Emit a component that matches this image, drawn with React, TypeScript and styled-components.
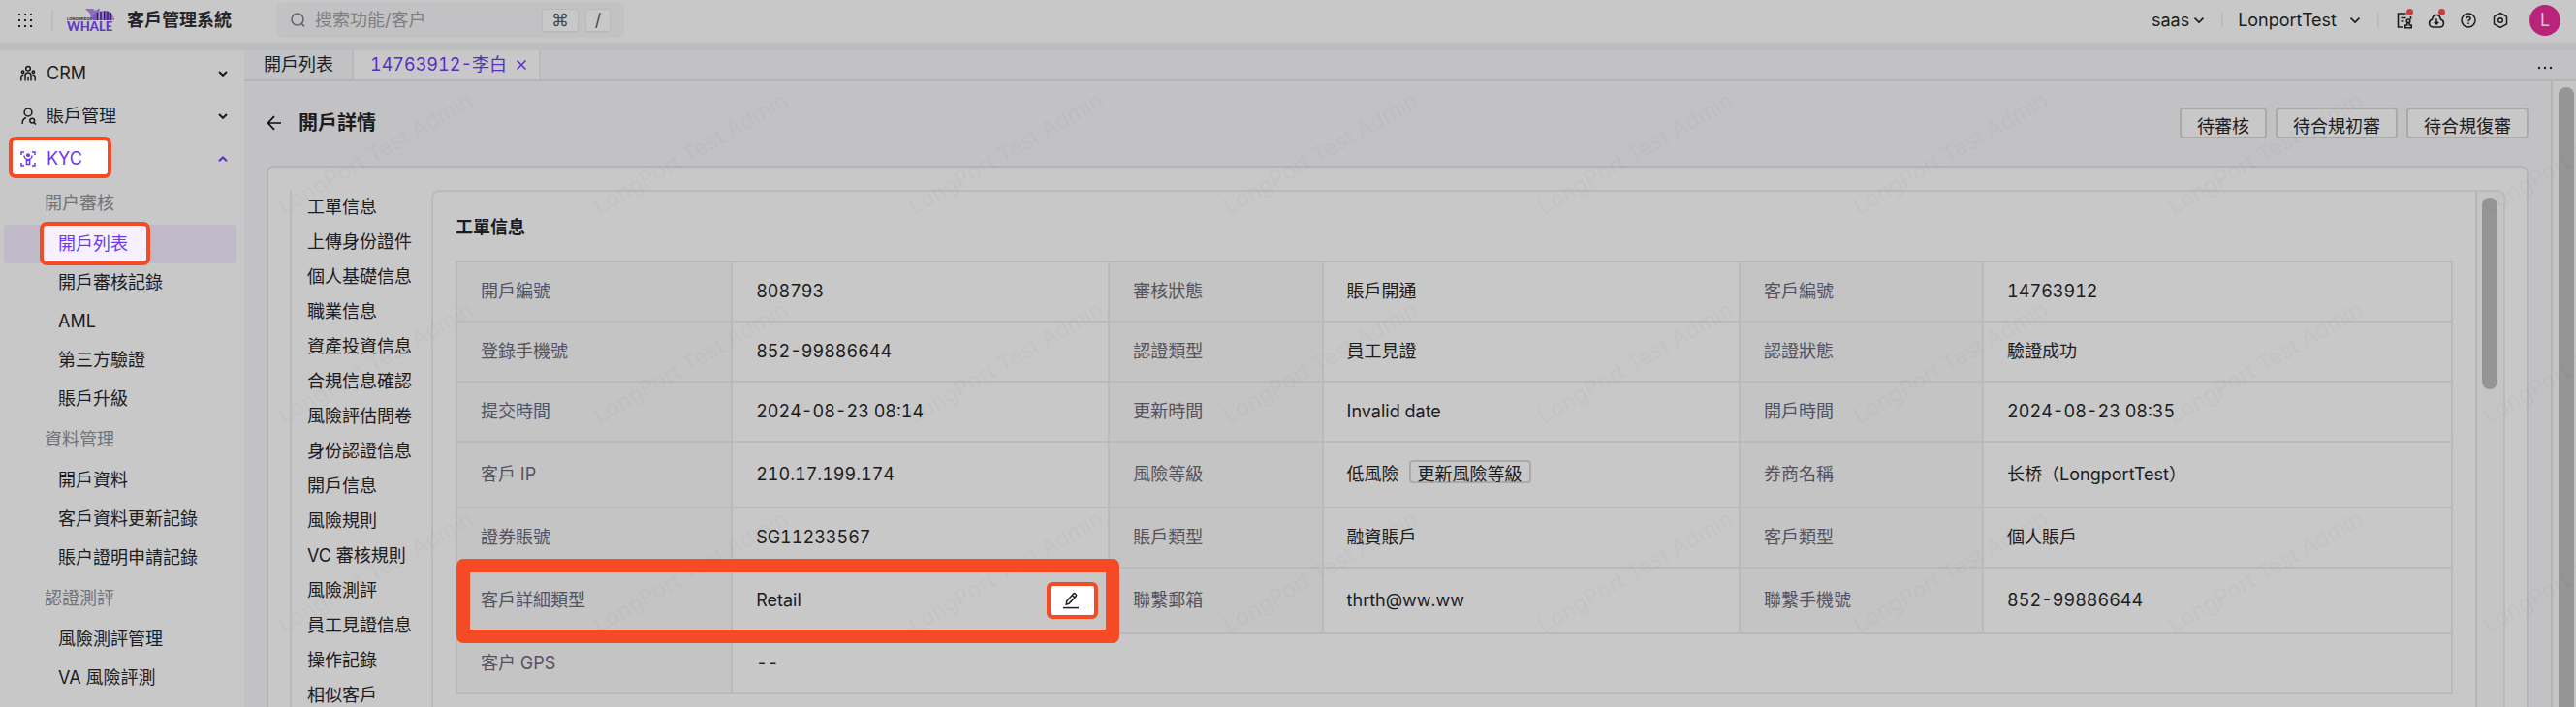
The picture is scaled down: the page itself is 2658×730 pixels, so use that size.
import React from "react";
import styled, { createGlobalStyle, css } from "styled-components";

const c = {
  panel: "#c8c8c8",
  page: "#c2c2c4",
  band: "#bcbdbf",
  label: "#c4c4c4",
  line: "#bababb",
  edge: "#b4b4b6",
  control: "#aaaaab",
  text: "#1c1c1e",
  muted: "#737374",
  labelText: "#555260",
  purple: "#5a2ec3",
  purpleBright: "#7038f5",
  mark: "#f54a24",
  thumb: "#959595",
};

const GlobalStyle = createGlobalStyle`
  *, *::before, *::after { box-sizing: border-box; }
  html, body { margin: 0; }
  body {
    background: ${c.page};
    color: ${c.text};
    font-family: Inter, "Noto Sans CJK TC", "Noto Sans CJK SC", sans-serif;
    font-size: 18px;
    font-variant-numeric: tabular-nums;
    line-height: 24px;
    overflow: hidden;
  }
  button, input, select { font: inherit; color: inherit; margin: 0; font-variant-numeric: inherit; }
  button { cursor: pointer; }
  a { color: inherit; text-decoration: none; }
  ul { list-style: none; margin: 0; padding: 0; }
  h1, h2 { margin: 0; font-weight: 600; }
  svg { display: block; flex: none; }
`;

const Shell = styled.div`
  display: flex;
  flex-direction: column;
  height: 100vh;
`;

const TopBar = styled.header`
  display: flex;
  align-items: center;
  height: 44px;
  padding: 0 16px 2px 15px;
  background: ${c.panel};
`;

const Band = styled.div`
  height: 8px;
  background: ${c.band};
`;

const IconButton = styled.button`
  display: flex;
  align-items: center;
  justify-content: center;
  position: relative;
  width: 22px;
  height: 24px;
  padding: 0;
  border: 0;
  background: none;
`;

const Divider = styled.span<{ $tall?: boolean }>`
  width: 2px;
  height: ${(p) => (p.$tall ? 22 : 16)}px;
  margin-left: ${(p) => (p.$tall ? 16 : 0)}px;
  background: #bdbdbe;
`;

const Brand = styled.a`
  display: flex;
  align-items: center;
  gap: 11px;
  margin-left: 13px;
  font-weight: 600;
  color: #24252c;
`;

const LogoBox = styled.svg`
  overflow: visible;
`;

const Search = styled.label`
  display: flex;
  align-items: center;
  width: 359px;
  height: 36px;
  margin-left: 46px;
  padding: 0 14px 0 13px;
  border-radius: 6px;
  background: ${c.page};
  gap: 7px;
`;

const SearchInput = styled.input`
  flex: 1;
  min-width: 0;
  padding: 0;
  border: 0;
  outline: 0;
  background: none;
  &::placeholder { color: #7f7f81; opacity: 1; }
`;

const Key = styled.kbd<{ $wide?: boolean }>`
  display: flex;
  align-items: center;
  justify-content: center;
  width: ${(p) => (p.$wide ? 38 : 26)}px;
  height: 25px;
  border: 1px solid #b9b9ba;
  border-bottom-width: 2px;
  border-radius: 4px;
  background: ${c.panel};
  color: #4a4a4c;
  font-family: inherit;
`;

const TopRight = styled.div`
  display: flex;
  align-items: center;
  margin-left: auto;
`;

const Switcher = styled.button<{ $gap: number }>`
  display: flex;
  align-items: center;
  gap: ${(p) => p.$gap}px;
  padding: 0 17px 0 15px;
  border: 0;
  background: none;
`;

const Tools = styled.div`
  display: flex;
  gap: 11px;
  margin: 0 19px 0 15px;
`;

const Dot = styled.span`
  position: absolute;
  top: 0;
  right: 2px;
  width: 7px;
  height: 7px;
  border-radius: 50%;
  background: #d03c3c;
`;

const Avatar = styled.button`
  width: 32px;
  height: 32px;
  padding: 0;
  border: 0;
  border-radius: 50%;
  background: #b8247a;
  color: #d2c8ce;
`;

const Body = styled.div`
  display: flex;
  flex: 1;
  min-height: 0;
`;

const Sidebar = styled.nav`
  width: 252px;
  flex: none;
  padding-top: 2px;
  background: ${c.panel};
  overflow: hidden;
`;

const MenuHead = styled.button<{ $open?: boolean }>`
  position: relative;
  display: flex;
  align-items: center;
  width: 100%;
  height: 44px;
  padding: 0 16px 0 20px;
  border: 0;
  background: none;
  color: ${(p) => (p.$open ? c.purple : c.text)};
  text-align: left;
`;

const MenuName = styled.span<{ $open?: boolean }>`
  display: flex;
  align-items: center;
  gap: 10px;
  flex: 1;
  position: relative;
  color: ${(p) => (p.$open ? c.purpleBright : "inherit")};
`;

const GroupTitle = styled.div`
  height: 44px;
  padding: 10px 42px;
  color: ${c.muted};
`;

const Sub = styled.div`
  padding: 2px 8px 0 4px;
`;

const MenuLink = styled.a<{ $active?: boolean }>`
  position: relative;
  display: block;
  height: 40px;
  padding: 8px 56px;
  border-radius: 4px;
  white-space: nowrap;
  ${(p) =>
    p.$active &&
    css`
      background: #c0b9c8;
      color: ${c.purpleBright};
    `}
`;

const LinkText = styled.span`
  position: relative;
`;

const Spot = styled.span<{ $kind: "head" | "item" }>`
  position: absolute;
  border: 4px solid ${c.mark};
  border-radius: 7px;
  ${(p) =>
    p.$kind === "head"
      ? css`left: 9px; top: -1px; width: 106px; height: 43px; background: #fff;`
      : css`left: 37px; top: -3px; width: 114px; height: 45px; background: #f6f0ff;`}
`;

const Main = styled.main`
  display: flex;
  flex-direction: column;
  flex: 1;
  min-width: 0;
`;

const TabBar = styled.div`
  display: flex;
  height: 32px;
  padding-left: 3px;
  border-bottom: 2px solid ${c.edge};
`;

const Tab = styled.div<{ $active?: boolean }>`
  display: flex;
  align-items: center;
  gap: 4px;
  padding: 0 19px 0 17px;
  border-right: 2px solid ${c.line};
  ${(p) =>
    p.$active &&
    css`
      padding: 0 7px 0 17px;
      background: ${c.panel};
      color: ${c.purple};
    `}
`;

const TabLabel = styled.button`
  height: 28px;
  padding: 0;
  border: 0;
  background: none;
  line-height: 24px;
  white-space: nowrap;
`;

const More = styled(IconButton)`
  margin: 6px 21px 0 auto;
`;

const Scroller = styled.div`
  position: relative;
  display: flex;
  flex: 1;
  min-height: 0;
`;

const Content = styled.div`
  display: flex;
  flex-direction: column;
  flex: 1;
  min-width: 0;
  padding: 0 23px;
  overflow: hidden;
`;

const Rail = styled.div`
  width: 26px;
  flex: none;
  padding: 6px 0 0 6px;
  border-left: 2px solid ${c.edge};
  background: #c5c5c5;
`;

const Thumb = styled.div<{ $long?: boolean }>`
  width: 16px;
  height: ${(p) => (p.$long ? "100%" : "198px")};
  border-radius: ${(p) => (p.$long ? "8px 8px 0 0" : "8px")};
  background: ${c.thumb};
`;

const PageHead = styled.div`
  display: flex;
  align-items: center;
  gap: 9px;
  padding: 27px 0 28px;
`;

const Back = styled(IconButton)`
  width: 16px;
  margin-right: 8px;
`;

const PageTitle = styled.h1`
  flex: 1;
  font-size: 20px;
  line-height: 28px;
`;

const Button = styled.button`
  height: 32px;
  padding: 8px 16px 0;
  border: 2px solid ${c.control};
  border-radius: 4px;
  background: ${c.panel};
  line-height: 20px;
  white-space: nowrap;
`;

const SmallButton = styled(Button)`
  height: 24px;
  margin: -8px 0 0 10px;
  padding: 4px 7px 0;
  vertical-align: middle;
  line-height: 18px;
`;

const Card = styled.section`
  display: flex;
  flex: 1;
  min-height: 0;
  padding: 23px 22px 0;
  border: 2px solid ${c.edge};
  border-bottom: 0;
  border-radius: 8px 8px 0 0;
  background: ${c.panel};
`;

const Anchors = styled.ul`
  width: 146px;
  flex: none;
  padding-left: 16px;
  border-left: 2px solid ${c.line};
  overflow: hidden;
  white-space: nowrap;
`;

const Anchor = styled.a`
  display: block;
  padding: 6px 0;
`;

const Detail = styled.div`
  display: flex;
  flex: 1;
  min-width: 0;
  border: 2px solid ${c.line};
  border-bottom: 0;
  border-radius: 8px 8px 0 0;
  overflow: hidden;
`;

const DetailBody = styled.div`
  flex: 1;
  min-width: 0;
  padding: 23px 23px 0;
`;

const DetailRail = styled(Rail)`
  width: 29px;
  padding-left: 5px;
`;

const SectionTitle = styled.h2`
  margin-bottom: 20px;
  font-size: 18px;
  line-height: 28px;
`;

const Table = styled.table`
  width: 100%;
  table-layout: fixed;
  border-collapse: collapse;
`;

const Col = styled.col<{ $w: string }>`
  width: ${(p) => p.$w};
`;

const Row = styled.tr<{ $tall?: boolean }>`
  position: relative;
  height: ${(p) => (p.$tall ? 68 : 62)}px;
`;

const Th = styled.th`
  padding: 0 24px;
  border: 2px solid ${c.line};
  background: ${c.label};
  color: ${c.labelText};
  font-weight: 400;
  text-align: left;
  white-space: nowrap;
`;

const Td = styled.td<{ $edit?: boolean }>`
  padding: 0 ${(p) => (p.$edit ? 10 : 24)}px 0 24px;
  border: 2px solid ${c.line};
  white-space: nowrap;
`;

const Editable = styled.div`
  display: flex;
  align-items: center;
  justify-content: space-between;
`;

const EditButton = styled.button`
  display: flex;
  align-items: center;
  justify-content: center;
  position: relative;
  z-index: 3;
  width: 53px;
  height: 38px;
  padding: 0 4px 0 0;
  border: 4px solid ${c.mark};
  border-radius: 6px;
  background: #fff;
`;

const RowMark = styled.span`
  position: absolute;
  z-index: 3;
  left: 0;
  top: -9px;
  bottom: -10px;
  width: 33.2%;
  border-radius: 7px;
  background:
    linear-gradient(${c.mark}, ${c.mark}) top / 100% 14px no-repeat,
    linear-gradient(${c.mark}, ${c.mark}) bottom / 100% 14px no-repeat,
    linear-gradient(${c.mark}, ${c.mark}) left / 14px 100% no-repeat,
    linear-gradient(${c.mark}, ${c.mark}) right / 14px 100% no-repeat;
  pointer-events: none;
`;

const Watermark = styled.svg`
  position: absolute;
  inset: 0 0 0 23px;
  width: calc(100% - 23px);
  height: 100%;
  z-index: 2;
  pointer-events: none;
`;

const Chevron = ({ up, bold }: { up?: boolean; bold?: boolean }) => (
  <svg width="12" height="12" viewBox="0 0 12 12" fill="none" stroke="currentColor" strokeWidth={bold ? 2 : 1.6}>
    <path d={up ? "M2 8.2 6 4.4l4 3.8" : bold ? "M2 4l4 3.8L10 4" : "M1.5 3.6l4.5 4.5 4.5-4.5"} />
  </svg>
);

const GridDots = () => (
  <svg width="16" height="16" viewBox="0 0 16 16" fill="currentColor">
    {[2, 8, 14].map((y) => [2, 8, 14].map((x) => <rect key={x + "-" + y} x={x - 1} y={y - 1} width="2" height="2" />))}
  </svg>
);

const WhaleLogo = () => (
  <LogoBox width="52" height="30" viewBox="0 0 52 30">
    <path d="M20 3h9l-.6 1.600 1.200.4 1.200-1L32 4.400 33 3h2c0 3-1.600 4.800-4 5.600-1.600 1.200-1.800 3.600-.8 5.900L27.600 15c-1.800-1.400-2.400-3.400-2-5.600C25 7 22 5.500 20 3z" fill="#8b6bc4" />
    <path d="M28 15c-1-3 .2-6 2.800-7.600C33 5.600 37 5 41 5.200c5 .4 8.600 4 9 9.800z" fill="#7a54c4" />
    <path d="M32.500 7v8M36 6v9M39.500 5.300V15M43 5.500V15M46.300 7v8" stroke="#2d2148" strokeWidth="1.200" />
    <path d="M34.300 6.300V15M38 5.500V15M48.200 9v6" stroke="#b7a6d3" strokeWidth=".9" />
    <text x="1" y="15" fontSize="4" fontWeight="700" fill="#2b2b33">LONGBRIDGE</text>
    <text x="1" y="26" fontFamily="Lato, sans-serif" fontSize="13" fontWeight="900" fill="#6339c2">WHALE</text>
  </LogoBox>
);

const SearchIcon = () => (
  <svg width="20" height="20" viewBox="0 0 20 20" fill="none" stroke="#626264" strokeWidth="1.500">
    <circle cx="9" cy="9" r="6" />
    <path d="M13.400 13.400 16 16.500" />
  </svg>
);

const PeopleIcon = () => (
  <svg width="18" height="18" viewBox="0 0 18 18" fill="none" stroke="currentColor" strokeWidth="1.500">
    <circle cx="9" cy="3.800" r="2.300" />
    <circle cx="3.600" cy="7.200" r="1.200" />
    <circle cx="14.400" cy="7.200" r="1.200" />
    <path d="M6 16.500V11a3 3 0 0 1 6 0v5.500M9 12.500v4M1.800 16.500V13c0-2 1-2.800 2.600-2.800M16.200 16.500V13c0-2-1-2.800-2.600-2.800" />
  </svg>
);

const PersonIcon = () => (
  <svg width="18" height="18" viewBox="0 0 18 18" fill="none" stroke="currentColor" strokeWidth="1.500">
    <circle cx="9" cy="5" r="3.900" />
    <path d="M3 17c0-3.500 1-5.500 4-6.500" />
    <circle cx="13.200" cy="13.600" r="2.400" />
    <path d="M15 15.500l2 2" />
  </svg>
);

const KycIcon = () => (
  <svg width="18" height="18" viewBox="0 0 18 18" fill="none" stroke="currentColor" strokeWidth="1.500">
    <path d="M2 5V2h3M13 2h3v3M16 13v3h-3M5 16H2v-3" />
    <circle cx="9" cy="5.300" r="1.300" fill="currentColor" />
    <path d="M4.800 5.500c.4 2.600 1.600 3.600 2.600 4V14.500h3.200V9.500c1-.4 2.200-1.400 2.600-4M7.600 9l1.400 1.400L10.400 9" />
  </svg>
);

const OrderIcon = () => (
  <svg width="18" height="18" viewBox="0 0 18 18" fill="none" stroke="currentColor" strokeWidth="1.600">
    <path d="M10.500 2h-8v14H8M15.500 5v3M5.500 6.500h5M5.500 10h3" />
    <circle cx="13" cy="9.800" r="1.800" />
    <path d="M12 11.500l-.3 2.500H9.800v2.800h6.400V14h-1.900l-.3-2.500" />
  </svg>
);

const CloudIcon = () => (
  <svg width="18" height="18" viewBox="0 0 18 18" fill="none" stroke="currentColor" strokeWidth="1.600">
    <path d="M4.600 8C5 5 6.800 3.500 9 3.500S13 5 13.400 8c2 .6 3 2 3 4 0 2.400-1.600 4-4 4H5.600c-2.400 0-4-1.600-4-4 0-2 1-3.400 3-4z" />
    <path d="M9 7.500v5.500M6.700 10.800 9 13l2.300-2.200" />
  </svg>
);

const HelpIcon = () => (
  <svg width="18" height="18" viewBox="0 0 18 18" fill="none" stroke="currentColor" strokeWidth="1.500">
    <circle cx="9" cy="9" r="7" />
    <path d="M6.900 7.400c0-1.300.9-2 2.100-2s2.100.8 2.100 1.900c0 1.300-2.100 1.500-2.100 3M9 11.500v1.600" />
  </svg>
);

const SettingsIcon = () => (
  <svg width="18" height="18" viewBox="0 0 18 18" fill="none" stroke="currentColor" strokeWidth="1.500">
    <path d="M9 1.500l6.500 3.700v7.600L9 16.500l-6.500-3.700V5.200z" />
    <circle cx="9" cy="9" r="2.300" />
  </svg>
);

const BackIcon = () => (
  <svg width="16" height="16" viewBox="0 0 16 16" fill="none" stroke="#0c0c0d" strokeWidth="1.700">
    <path d="M15 8H1.500M8 1.200 1.500 8 8 14.800" />
  </svg>
);

const CloseIcon = () => (
  <svg width="12" height="12" viewBox="0 0 12 12" fill="none" stroke="currentColor" strokeWidth="1.500">
    <path d="M1.500 1.500l9 9M10.500 1.500l-9 9" />
  </svg>
);

const MoreIcon = () => (
  <svg width="16" height="16" viewBox="0 0 16 16" fill="currentColor">
    <circle cx="2" cy="8" r="1.200" />
    <circle cx="8" cy="8" r="1.200" />
    <circle cx="14" cy="8" r="1.200" />
  </svg>
);

const PenIcon = () => (
  <svg width="18" height="18" viewBox="0 0 18 18" fill="none" stroke="#1f1f22" strokeWidth="1.500">
    <path d="M1 16.600h16" />
    <path d="M4.300 13.200l.4-3.400 7-7.800c.4-.4 1-.4 1.400-.1l1.200 1.100c.4.4.4 1 0 1.400l-7 7.700zM10.500 3.700l2.300 2.200" />
  </svg>
);

const menu = [
  { group: "開户審核", items: ["開戶列表", "開戶審核記錄", "AML", "第三方驗證", "賬戶升級"] },
  { group: "資料管理", items: ["開戶資料", "客戶資料更新記錄", "賬户證明申請記錄"] },
  { group: "認證測評", items: ["風險測評管理", "VA 風險評測"] },
];

const anchors = [
  "工單信息", "上傳身份證件", "個人基礎信息", "職業信息", "資產投資信息",
  "合規信息確認", "風險評估問卷", "身份認證信息", "開戶信息", "風險規則",
  "VC 審核規則", "風險測評", "員工見證信息", "操作記錄", "相似客戶",
];

type Field = [string, React.ReactNode];

const rows: { tall?: boolean; marked?: boolean; fields: Field[] }[] = [
  { fields: [["開戶編號", "808793"], ["審核狀態", "賬戶開通"], ["客戶編號", "14763912"]] },
  { fields: [["登錄手機號", "852-99886644"], ["認證類型", "員工見證"], ["認證狀態", "驗證成功"]] },
  { fields: [["提交時間", "2024-08-23 08:14"], ["更新時間", "Invalid date"], ["開戶時間", "2024-08-23 08:35"]] },
  {
    tall: true,
    fields: [
      ["客戶 IP", "210.17.199.174"],
      ["風險等級", <>低風險<SmallButton type="button">更新風險等級</SmallButton></>],
      ["券商名稱", <span lang="zh-CN" key="broker">长桥（LongportTest）</span>],
    ],
  },
  { fields: [["證券賬號", "SG11233567"], ["賬戶類型", "融資賬戶"], ["客戶類型", "個人賬戶"]] },
  { tall: true, marked: true, fields: [["客戶詳細類型", "Retail"], ["聯繫郵箱", "thrth@ww.ww"], ["聯繫手機號", "852-99886644"]] },
  { fields: [["客户 GPS", "--"]] },
];

const columns = ["13.8%", "18.9%", "10.7%", "20.9%", "12.2%", "23.5%"];

export default function App() {
  return (
    <Shell lang="zh-HK">
      <GlobalStyle />
      <TopBar>
        <IconButton type="button" aria-label="應用"><GridDots /></IconButton>
        <Divider $tall />
        <Brand href="#"><WhaleLogo />客戶管理系統</Brand>
        <Search>
          <SearchIcon />
          <SearchInput type="text" placeholder="搜索功能/客户" aria-label="搜索" />
          <Key $wide>⌘</Key>
          <Key>/</Key>
        </Search>
        <TopRight>
          <Switcher type="button" $gap={4}>saas<Chevron /></Switcher>
          <Divider />
          <Switcher type="button" $gap={13}>LonportTest<Chevron /></Switcher>
          <Divider />
          <Tools>
            <IconButton type="button" aria-label="工單"><OrderIcon /><Dot /></IconButton>
            <IconButton type="button" aria-label="下載"><CloudIcon /><Dot /></IconButton>
            <IconButton type="button" aria-label="幫助"><HelpIcon /></IconButton>
            <IconButton type="button" aria-label="設置"><SettingsIcon /></IconButton>
          </Tools>
          <Avatar type="button">L</Avatar>
        </TopRight>
      </TopBar>
      <Band />
      <Body>
        <Sidebar>
          <MenuHead type="button"><MenuName><PeopleIcon />CRM</MenuName><Chevron bold /></MenuHead>
          <MenuHead type="button"><MenuName><PersonIcon />賬戶管理</MenuName><Chevron bold /></MenuHead>
          <MenuHead type="button" $open>
            <Spot $kind="head" />
            <MenuName $open><KycIcon />KYC</MenuName>
            <Chevron bold up />
          </MenuHead>
          <Sub>
            {menu.map((m, g) => (
              <React.Fragment key={m.group}>
                <GroupTitle>{m.group}</GroupTitle>
                {m.items.map((item, i) => {
                  const active = g === 0 && i === 0;
                  return (
                    <MenuLink href="#" key={item} $active={active}>
                      {active && <Spot $kind="item" />}
                      <LinkText>{item}</LinkText>
                    </MenuLink>
                  );
                })}
              </React.Fragment>
            ))}
          </Sub>
        </Sidebar>
        <Main>
          <TabBar>
            <Tab><TabLabel type="button">開戶列表</TabLabel></Tab>
            <Tab $active>
              <TabLabel type="button">14763912-李白</TabLabel>
              <IconButton type="button" aria-label="關閉"><CloseIcon /></IconButton>
            </Tab>
            <More type="button" aria-label="更多"><MoreIcon /></More>
          </TabBar>
          <Scroller>
            <Content>
              <PageHead>
                <Back type="button" aria-label="返回"><BackIcon /></Back>
                <PageTitle>開戶詳情</PageTitle>
                <Button type="button">待審核</Button>
                <Button type="button">待合規初審</Button>
                <Button type="button">待合規復審</Button>
              </PageHead>
              <Card>
                <Anchors>
                  {anchors.map((a) => (
                    <li key={a}><Anchor href="#">{a}</Anchor></li>
                  ))}
                </Anchors>
                <Detail>
                  <DetailBody>
                    <SectionTitle>工單信息</SectionTitle>
                    <Table>
                      <colgroup>{columns.map((w, i) => <Col key={i} $w={w} />)}</colgroup>
                      <tbody>
                        {rows.map((row, r) => (
                          <Row key={r} $tall={row.tall}>
                            {row.fields.map(([name, value], i) => {
                              const marked = row.marked && i === 0;
                              return (
                                <React.Fragment key={name}>
                                  <Th scope="row">{marked && <RowMark />}{name}</Th>
                                  <Td $edit={marked} colSpan={row.fields.length === 1 ? 5 : 1}>
                                    {marked ? (
                                      <Editable>
                                        {value}
                                        <EditButton type="button" aria-label="編輯"><PenIcon /></EditButton>
                                      </Editable>
                                    ) : (
                                      value
                                    )}
                                  </Td>
                                </React.Fragment>
                              );
                            })}
                          </Row>
                        ))}
                      </tbody>
                    </Table>
                  </DetailBody>
                  <DetailRail><Thumb /></DetailRail>
                </Detail>
              </Card>
            </Content>
            <Rail><Thumb $long /></Rail>
            <Watermark aria-hidden="true">
              <defs>
                <pattern id="wm" width="325" height="216" patternUnits="userSpaceOnUse">
                  <text x="18" y="138" transform="rotate(-30 18 138)" fontSize="23" fill="#000" fillOpacity="0.022">
                    LongPort Test Admin
                  </text>
                </pattern>
              </defs>
              <rect width="100%" height="100%" fill="url(#wm)" />
            </Watermark>
          </Scroller>
        </Main>
      </Body>
    </Shell>
  );
}
